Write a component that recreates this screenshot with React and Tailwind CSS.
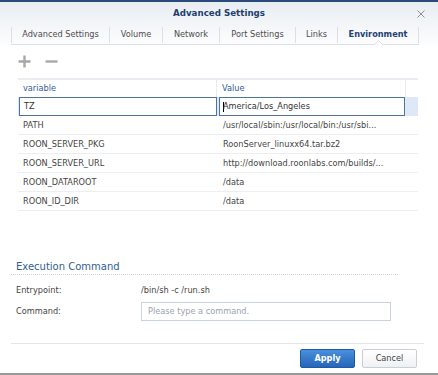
const tabs = [
  { label: "Advanced Settings", w: "w-[97px]" },
  { label: "Volume", w: "w-[52px]" },
  { label: "Network", w: "w-[56px]" },
  { label: "Port Settings", w: "w-[75px]" },
  { label: "Links", w: "w-[41px]" },
  { label: "Environment", w: "w-[80px]", active: true },
];

const rows = [
  ["PATH", "/usr/local/sbin:/usr/local/bin:/usr/sbi..."],
  ["ROON_SERVER_PKG", "RoonServer_linuxx64.tar.bz2"],
  ["ROON_SERVER_URL", "http://download.roonlabs.com/builds/..."],
  ["ROON_DATAROOT", "/data"],
  ["ROON_ID_DIR", "/data"],
];

function Sep() {
  return <div className="h-[16px] w-px bg-[#dce0e5]" />;
}

export default function App() {
  return (
    <div
      className="relative w-[438px] h-[375px] overflow-hidden bg-white text-[8.2px] text-[#444]"
      style={{ fontFamily: '"DejaVu Sans", Verdana, sans-serif' }}
    >
      <div className="h-[2px] bg-[#2a4b7a]" />

      {/* header */}
      <div className="bg-gradient-to-b from-[#e8edf2] to-[#fdfdfe]">
        <div className="relative h-[23px] flex items-center justify-center">
          <span className="text-[8.7px] font-bold text-[#1e3f6e]">Advanced Settings</span>
          <svg
            className="absolute right-[13px] top-[8px]"
            width="8"
            height="8"
            viewBox="0 0 8 8"
          >
            <path d="M0.5 0.5L7.5 7.5M7.5 0.5L0.5 7.5" stroke="#8f8f8f" strokeWidth="1" />
          </svg>
        </div>
        <div className="relative ml-[11px] w-[408px] h-[20px] flex items-center border-b border-[#dcdfe3]">
          <Sep />
          {tabs.map((t) => (
            <div key={t.label} className="flex items-center">
              <div
                className={`${t.w} text-center ${
                  t.active ? "font-bold text-[#1f4172]" : "text-[#4d4d4d]"
                }`}
              >
                {t.label}
              </div>
              <Sep />
            </div>
          ))}
          <svg
            className="absolute left-[363px] bottom-[-1px]"
            width="9"
            height="5"
            viewBox="0 0 9 5"
          >
            <path d="M0 5L4.5 0.5L9 5Z" fill="#ffffff" />
            <path d="M0 5L4.5 0.5L9 5" fill="none" stroke="#dcdfe3" strokeWidth="1" />
          </svg>
        </div>
      </div>

      {/* toolbar */}
      <div className="h-[33px] pl-[18px] flex items-center gap-[14px]">
        <svg width="13" height="13" viewBox="0 0 13 13">
          <path d="M6.5 0.5V12.5M0.5 6.5H12.5" stroke="#a8a8a8" strokeWidth="2.4" />
        </svg>
        <svg width="13" height="13" viewBox="0 0 13 13">
          <path d="M0.5 6.5H12.5" stroke="#a8a8a8" strokeWidth="2.4" />
        </svg>
      </div>

      {/* table */}
      <div className="ml-[18px] w-[400px]">
        <div className="h-[19px] flex border-t-2 border-[#e9edf1] text-[#31609a]">
          <div className="w-[199px] pl-[5px] flex items-center border-r border-[#e6ebf0]">variable</div>
          <div className="w-[189px] pl-[5px] flex items-center border-r border-[#e6ebf0]">Value</div>
          <div className="flex-1" />
        </div>
        <div className="h-[19px] flex bg-[#dde9f8] text-[#333]">
          <div className="w-[199px] pl-px">
            <div className="h-full border border-[#50729f] bg-white pl-[4px] flex items-center">TZ</div>
          </div>
          <div className="w-[188px] pl-[2px]">
            <div className="h-full border border-[#50729f] bg-white pl-[3px] flex items-center">
              <span className="inline-block w-px h-[10px] bg-black -mr-px" />
              America/Los_Angeles
            </div>
          </div>
          <div className="flex-1" />
        </div>
        {rows.map(([k, v]) => (
          <div key={k} className="h-[19px] flex items-center border-b border-[#eceef1]">
            <div className="w-[200px] pl-[5px]">{k}</div>
            <div className="pl-[5px]">{v}</div>
          </div>
        ))}
      </div>

      {/* execution command */}
      <div className="mt-[47px] ml-[11px] w-[387px] h-[17px] pl-[5px] flex items-center border-b border-dotted border-[#c9d4e0] text-[10px] text-[#2f5e94]">
        Execution Command
      </div>
      <div className="mt-[6px] h-[18px] flex items-center pl-[16px]">
        <div className="w-[125px]">Entrypoint:</div>
        <div>/bin/sh -c /run.sh</div>
      </div>
      <div className="mt-[3px] h-[19px] flex items-center pl-[16px]">
        <div className="w-[125px]">Command:</div>
        <div className="w-[250px] h-full border border-[#c9d3de] pl-[6px] flex items-center text-[#9aa3ad]">
          Please type a command.
        </div>
      </div>

      {/* footer */}
      <div className="mt-[22px] ml-[11px] mr-[14px] border-t border-[#e2e4e7]" />
      <div className="mt-[5px] pr-[21px] flex justify-end gap-[7px]">
        <button className="w-[55px] h-[19px] rounded-[2px] border border-[#1d5aa6] bg-gradient-to-b from-[#4a8fdc] to-[#2465b9] text-white font-bold text-[8.2px]">
          Apply
        </button>
        <button className="w-[55px] h-[19px] rounded-[2px] border border-[#c8cfd7] bg-gradient-to-b from-white to-[#eef1f4] text-[#444] text-[8.2px]">
          Cancel
        </button>
      </div>
      <div className="mt-[5px] h-[2px] bg-[#9a9a9a]" />
    </div>
  );
}
